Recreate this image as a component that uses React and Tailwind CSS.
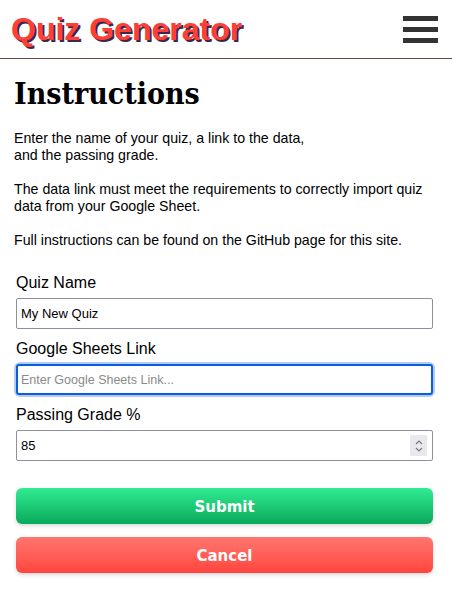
import React from "react";

function Hamburger() {
  return (
    <button type="button" aria-label="Menu" className="flex w-[35px] flex-col gap-[6px]">
      <span className="block h-[5px] w-full bg-[#333333]" />
      <span className="block h-[5px] w-full bg-[#333333]" />
      <span className="block h-[5px] w-full bg-[#333333]" />
    </button>
  );
}

function Field({ label, children }) {
  return (
    <div className="flex flex-col">
      <label className="text-[16px] leading-[18px] text-black">{label}</label>
      <div className="mt-[6px]">{children}</div>
    </div>
  );
}

export default function App() {
  return (
    <div className="min-h-[603px] w-[452px] bg-white font-['Liberation_Sans',Arial,sans-serif] text-black">
      <header className="flex h-[59px] items-center justify-between border-b border-[#6b4a45] pl-[11px] pr-[14px]">
        <h1 className="text-[32px] font-bold leading-none text-[#ff3f37] [text-shadow:2px_2px_0_#3a2a4a]">Quiz Generator</h1>
        <Hamburger />
      </header>

      <main className="px-[14px] pt-[15px]">
        <h2 className="font-['DejaVu_Serif_Condensed','DejaVu_Serif',serif] text-[30px] font-bold leading-[40px]">Instructions</h2>

        <div className="mt-[16px] text-[14.2px] leading-[17px]">
          <p>
            Enter the name of your quiz, a link to the data,
            <br />
            and the passing grade.
          </p>
          <p className="mt-[17px]">The data link must meet the requirements to correctly import quiz data from your Google Sheet.</p>
          <p className="mt-[17px]">Full instructions can be found on the GitHub page for this site.</p>
        </div>

        <form className="mt-[25px] flex flex-col gap-[11px] pl-[2px] pr-[5px]">
          <Field label="Quiz Name">
            <input
              type="text"
              defaultValue="My New Quiz"
              className="block h-[31px] w-full rounded-[2px] border border-[#8f8f9d] px-[4px] text-[13px] text-black"
            />
          </Field>
          <Field label="Google Sheets Link">
            <div className="rounded-[4px] ring-2 ring-[#b3cbf2]">
              <input
                type="text"
                placeholder="Enter Google Sheets Link..."
                className="block h-[31px] w-full rounded-[3px] border-2 border-[#0a5fd8] px-[3px] text-[12.5px] text-black outline-none placeholder:text-[#8a8a8a]"
              />
            </div>
          </Field>
          <Field label="Passing Grade %">
            <div className="relative">
              <input
                type="text"
                defaultValue="85"
                className="block h-[31px] w-full rounded-[2px] border border-[#8f8f9d] px-[4px] text-[13px] text-black"
              />
              <span className="absolute right-[6px] top-[5px] flex h-[21px] w-[17px] flex-col items-center justify-center bg-[#e9e9ed]">
                <svg viewBox="0 0 10 14" className="h-[14px] w-[10px]" fill="none" stroke="#7a7a85" strokeWidth="1.2">
                  <path d="M2 5 L5 2 L8 5" />
                  <path d="M2 9 L5 12 L8 9" />
                </svg>
              </span>
            </div>
          </Field>

          <div className="mt-[16px] flex flex-col gap-[13px]">
            <button
              type="button"
              className="h-[36px] w-full rounded-[6px] bg-gradient-to-b from-[#30ec92] to-[#07a95a] pt-[3px] font-['DejaVu_Sans',sans-serif] text-[15px] font-bold text-white shadow-[0_2px_4px_rgba(0,0,0,0.15)]"
            >
              Submit
            </button>
            <button
              type="button"
              className="h-[36px] w-full rounded-[6px] bg-gradient-to-b from-[#ff766f] to-[#ff433d] pt-[3px] font-['DejaVu_Sans',sans-serif] text-[15px] font-bold text-white shadow-[0_2px_4px_rgba(0,0,0,0.15)]"
            >
              Cancel
            </button>
          </div>
        </form>
      </main>
    </div>
  );
}
